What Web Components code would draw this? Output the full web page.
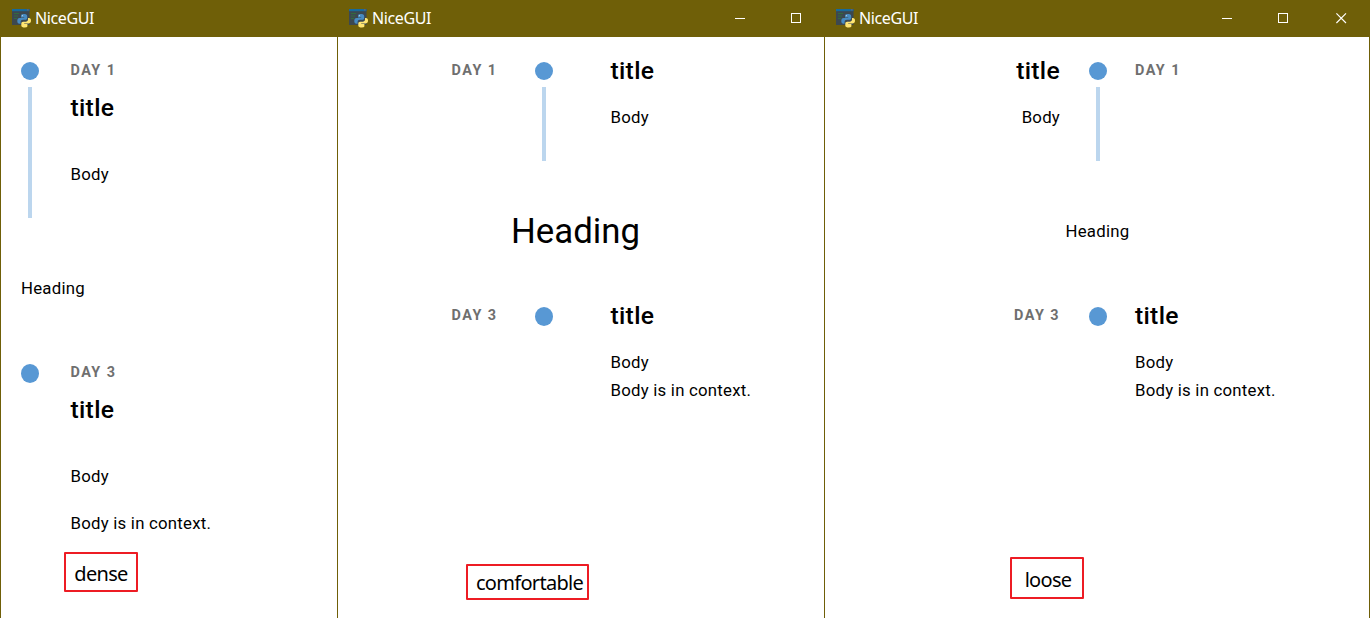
<!DOCTYPE html>
<html lang="en"><head><meta charset="utf-8"><title>NiceGUI</title>
<style>
html,body{margin:0;height:100%;overflow:hidden;background:#fff}
body{font-family:Roboto,"Liberation Sans",sans-serif;color:#000;font-size:16.8px}
.desk{display:grid;grid-template-columns:337px 487px 546px;height:618px}
</style></head><body>
<div class="desk">
<app-window controls="0">
  <time-entry style="--cols:18px 1fr;--gap:31.5px;--pad:20px;--top:25px;height:190px" line="131">
    <text-line slot="right" kind="day" style="--h:18px">DAY 1</text-line>
    <text-line slot="right" kind="title" style="--h:29px;--mt:13px">title</text-line>
    <text-line slot="right" style="--h:28px;--mt:38px">Body</text-line>
  </time-entry>
  <text-line style="--h:28px;--mt:47px;margin-left:20px">Heading</text-line>
  <time-entry style="--cols:18px 1fr;--gap:31.5px;--pad:20px;--top:25px;margin-top:37px;height:213px" tall>
    <text-line slot="right" kind="day" style="--h:18px">DAY 3</text-line>
    <text-line slot="right" kind="title" style="--h:29px;--mt:13px">title</text-line>
    <text-line slot="right" style="--h:28px;--mt:38px">Body</text-line>
    <text-line slot="right" style="--h:28px;--mt:19px">Body is in context.</text-line>
  </time-entry>
  <note-box style="width:70px;height:36px;margin:0 0 0 63px;--nt:3px"><span>dense</span></note-box>
</app-window>
<app-window controls="2">
  <time-entry style="--cols:159.5px 18px 1fr;--gap:37.5px;--gap2:57.5px;--top:25px;height:140px" line="74">
    <text-line slot="left" kind="day" style="--h:18px">DAY 1</text-line>
    <text-line slot="right" kind="title" style="--h:29px;--mt:-6px">title</text-line>
    <text-line slot="right" style="--h:28px;--mt:18px">Body</text-line>
  </time-entry>
  <text-line kind="big" style="--h:40px;--mt:34px;margin-left:173px">Heading</text-line>
  <time-entry style="--cols:159.5px 18px 1fr;--gap:37.5px;--gap2:57.5px;--top:25px;margin-top:31px;height:283px" tall>
    <text-line slot="left" kind="day" style="--h:18px">DAY 3</text-line>
    <text-line slot="right" kind="title" style="--h:29px;--mt:-6px">title</text-line>
    <text-line slot="right" style="--h:28px;--mt:18px">Body</text-line>
    <text-line slot="right" style="--h:28px">Body is in context.</text-line>
  </time-entry>
  <note-box style="width:119px;height:32px;margin:-1px 0 0 128px;--nt:1px;--nl:4px"><span>comfortable</span></note-box>
</app-window>
<app-window controls="3">
  <time-entry style="--cols:235px 18px 1fr;--gap:29px;--gap2:28px;--top:25px;height:157px" line="74">
    <text-line slot="left" kind="title" style="--h:29px;--mt:-6px">title</text-line>
    <text-line slot="left" style="--h:28px;--mt:18px">Body</text-line>
    <text-line slot="right" kind="day" style="--h:18px">DAY 1</text-line>
  </time-entry>
  <text-line style="--h:28px;--mt:23px;margin-left:240.5px">Heading</text-line>
  <time-entry style="--cols:235px 18px 1fr;--gap:29px;--gap2:28px;--top:25px;margin-top:37px;height:277px" tall>
    <text-line slot="left" kind="day" style="--h:18px">DAY 3</text-line>
    <text-line slot="right" kind="title" style="--h:29px;--mt:-6px">title</text-line>
    <text-line slot="right" style="--h:28px;--mt:18px">Body</text-line>
    <text-line slot="right" style="--h:28px">Body is in context.</text-line>
  </time-entry>
  <note-box style="width:70px;height:38px;margin:-2px 0 0 185px;--nt:3px;--nl:2px"><span>loose</span></note-box>
</app-window>
</div>
<script>
class AppWindow extends HTMLElement{
  connectedCallback(){
    const n=+this.getAttribute('controls');
    const min='<svg width="11" height="11" viewBox="0 0 11 11"><path d="M0 5.5H10" stroke="#fff"/></svg>';
    const max='<svg width="11" height="11" viewBox="0 0 11 11"><rect x=".5" y=".5" width="9" height="9" fill="none" stroke="#fff"/></svg>';
    const close='<svg width="11" height="11" viewBox="0 0 11 11"><path d="M.4.4L10 10M10 .4L.4 10" stroke="#fff" stroke-width="1.15"/></svg>';
    this.attachShadow({mode:'open'}).innerHTML=`<style>
    :host{display:flex;flex-direction:column;min-width:0;height:618px;box-sizing:border-box;overflow:hidden;background:#fff;--edge:#6f5f08}
    header{height:37px;flex:none;background:var(--edge);display:flex;align-items:center;box-sizing:border-box;padding-left:12px}
    header b{font:400 16px/22px "Noto Sans",sans-serif;color:#fff;margin:-1px 0 0 4px;flex:1;letter-spacing:-.4px}
    .c{display:flex;gap:45px;height:11px;margin-right:${n==3?23:22}px}.c svg:nth-child(3){margin-left:2px}
    main{flex:1;min-height:0;border-left:1px solid var(--edge);${n==3?'border-right:1px solid var(--edge);':''}overflow:hidden}
    svg{display:block;flex:none}</style>
    <header><svg width="19" height="19" viewBox="0 0 19 19"><rect y="0" width="17.5" height="16" fill="#3c4850"/><rect width="17.5" height="2.2" fill="#176a9c"/><rect x="15.2" y=".4" width="1.2" height="1" fill="#bd5141"/><path d="M2 4.5H7M2 7H6M2 9.5H5" stroke="#326b3e" stroke-width="1.1"/>
    <path d="M11.5 5C9 5 9 6 9 7v1.4h3.2v.7H7.6C6 9.1 5.3 10.3 5.3 12S6 14.7 7.5 14.7H8.6V13c0-1.3 1-2.2 2.2-2.2h2.6c1.1 0 1.8-.8 1.8-1.8V7c0-1.4-1.4-2-3.7-2Z" fill="#478bc2"/>
    <path d="M12.9 18.5c2.5 0 2.5-1 2.5-2v-1.4h-3.2v-.7h4.6c1.6 0 2.2-1.1 2.2-2.8 0-1.7-.7-2.7-2.1-2.7h-.9v1.7c0 1.3-1 2.2-2.2 2.2h-2.6c-1.1 0-1.9.8-1.9 1.8v1.9c0 1.4 1.4 2 3.6 2Z" fill="#ffe572"/><circle cx="10.5" cy="6.7" r=".6" fill="#b8d4e8"/></svg>
    <b>NiceGUI</b><div class="c">${n?min+max:''}${n==3?close:''}</div></header><main><slot></slot></main>`;
  }
}
class TimeEntry extends HTMLElement{
  connectedCallback(){
    const dense=!this.querySelector('[slot=left]'), line=this.getAttribute('line');
    this.attachShadow({mode:'open'}).innerHTML=`<style>
    :host{display:grid;box-sizing:border-box;grid-template-columns:var(--cols);padding:var(--top) 0 0 var(--pad,0px)}
    .left{display:flex;flex-direction:column;align-items:flex-end}
    .rail{display:flex;flex-direction:column;align-items:center;width:18px;margin-left:${dense?'0':'var(--gap)'}}
    .right{margin-left:${dense?'var(--gap)':'calc(var(--gap) + var(--gap2))'};display:flex;flex-direction:column}
    i{width:18px;height:${this.hasAttribute('tall')?19:18}px;border-radius:50%;background:#5898d4;flex:none}
    u{width:4px;height:${line||0}px;margin-top:7px;background:#bcd6ee}</style>
    ${dense?'':'<div class="left"><slot name="left"></slot></div>'}<div class="rail"><i></i>${line?'<u></u>':''}</div><div class="right"><slot name="right"></slot></div>`;
  }
}
class TextLine extends HTMLElement{
  connectedCallback(){
    this.attachShadow({mode:'open'}).innerHTML=`<style>
    :host{display:block;white-space:nowrap;height:var(--h);margin-top:var(--mt,0px);font-size:16.8px;line-height:var(--h);letter-spacing:.23px}
    :host([kind=day]){font-size:14.4px;font-weight:700;letter-spacing:1.45px;color:#6f6f6f}
    :host([kind=title]){font-size:24.7px;font-weight:500;letter-spacing:.3px}
    :host([kind=big]){font-size:34.8px;letter-spacing:0}</style><slot></slot>`;
  }
}
class NoteBox extends HTMLElement{
  connectedCallback(){
    this.attachShadow({mode:'open'}).innerHTML=`<style>
    :host{display:flex;align-items:center;justify-content:center;border:2px solid #ed1c24;border-radius:1px;font:20px/24px "Noto Sans",sans-serif;letter-spacing:-.7px}
    div{padding:var(--nt,0px) 0 0 var(--nl,0px)}
    </style><div><slot></slot></div>`;
  }
}
customElements.define('app-window',AppWindow);
customElements.define('time-entry',TimeEntry);
customElements.define('text-line',TextLine);
customElements.define('note-box',NoteBox);
</script></body></html>
